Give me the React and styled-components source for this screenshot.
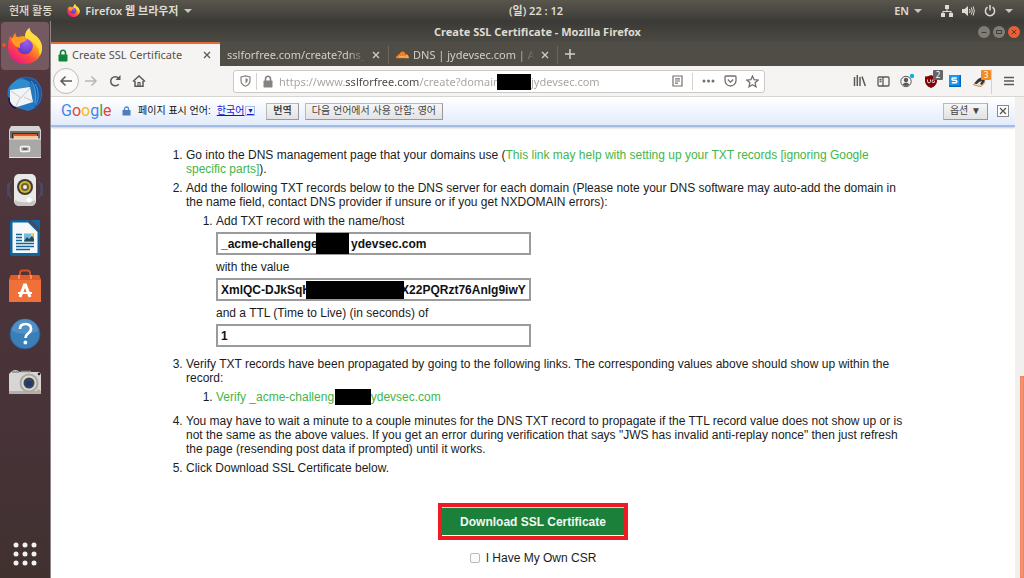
import React from "react";
import styled, { createGlobalStyle, css } from "styled-components";

const UI = `"Noto Sans", "Noto Sans CJK KR", sans-serif`;
const WEB = `"Liberation Sans", "Noto Sans CJK KR", sans-serif`;

const GlobalStyle = createGlobalStyle`
  *, *::before, *::after { box-sizing: border-box; }
  body { margin: 0; background: #ffffff; }
  button, input { font: inherit; }
  svg { display: block; flex: none; }
`;

/* ---------- desktop shell ---------- */

const Desktop = styled.div`
  display: flex;
  flex-direction: column;
  height: 100vh;
  overflow: hidden;
  font-family: ${UI};
  font-size: 11px;
  line-height: 16px;
`;

const TopBar = styled.header`
  display: flex;
  align-items: center;
  height: 21px;
  flex: none;
  background: linear-gradient(#59564d, #3c3b37);
  color: #dfdbd2;
  font-weight: 500;
`;

const TopGroup = styled.div`
  display: flex;
  flex: 1 1 0;
  align-items: center;
  gap: ${(p) => p.$gap}px;
  justify-content: ${(p) => (p.$end ? "flex-end" : "flex-start")};
  padding: ${(p) => (p.$end ? "0 11px 0 0" : "0 0 0 9px")};
  margin-right: ${(p) => (p.$end ? 0 : 50)}px;
`;

const PanelButton = styled.button`
  display: flex;
  align-items: center;
  gap: 5px;
  padding: 0;
  border: 0;
  background: none;
  color: inherit;
  font-weight: ${(p) => (p.$strong ? 600 : 500)};
  white-space: nowrap;
`;

const StatusIcons = styled(PanelButton)`
  gap: 9px;
  margin-left: 10px;
`;

const Caret = styled.span`
  border: 4px solid transparent;
  border-top-color: #c9c5bc;
  border-bottom: 0;
`;

const Workspace = styled.div`
  display: flex;
  flex: 1;
  min-height: 0;
`;

const Dock = styled.nav`
  display: flex;
  flex-direction: column;
  justify-content: space-between;
  width: 50px;
  flex: none;
  background: linear-gradient(#57363d, #4c353b 30%, #483339 70%, #40312f);
`;

const DockList = styled.div`
  display: flex;
  flex-direction: column;
  padding-top: 1px;
`;

const DockItem = styled.button`
  display: flex;
  align-items: center;
  justify-content: center;
  height: 48px;
  padding: 0;
  border: 0;
  margin: 0 1px;
  border-radius: 4px;
  background: ${(p) => (p.$active ? "#745a60" : "none")};
  ${(p) =>
    p.$active &&
    css`
      position: relative;
      &::before {
        content: "";
        position: absolute;
        left: 1px;
        top: 21px;
        width: 4px;
        height: 4px;
        border-radius: 50%;
        background: #e95420;
      }
    `}
`;

/* ---------- browser window ---------- */

const Window = styled.main`
  display: flex;
  flex-direction: column;
  flex: 1;
  min-width: 0;
  border-left: 1px solid #8d8688;
`;

const TitleBar = styled.div`
  display: grid;
  grid-template-columns: 1fr auto 1fr;
  align-items: center;
  height: 21px;
  flex: none;
  padding: 0 4px;
  background: linear-gradient(#3b3a36, #4b4943);
  color: #dfdbd2;
`;

const WindowTitle = styled.h1`
  grid-column: 2;
  margin: 0;
  font-size: 11px;
  font-weight: 700;
`;

const WindowControls = styled.div`
  display: flex;
  justify-content: flex-end;
  gap: 3px;
`;

const WindowButton = styled.button`
  display: flex;
  align-items: center;
  justify-content: center;
  width: 12px;
  height: 12px;
  padding: 0;
  border: 0;
  border-radius: 50%;
  background: ${(p) => (p.$close ? "#ec5f32" : "#807d76")};
  color: #3f3d38;
`;

const TabStrip = styled.div`
  display: flex;
  height: 24px;
  flex: none;
  background: #504d46;
`;

const Tab = styled.div`
  display: flex;
  align-items: center;
  gap: 4px;
  flex: 0 1 169px;
  min-width: 0;
  padding: 0 7px;
  color: ${(p) => (p.$active ? "#55524c" : "#d3cfc7")};
  ${(p) =>
    p.$active
      ? css`
          background: #f5f4f2;
          border-top: 2px solid #e8683c;
        `
      : css`
          border-top: 2px solid transparent;
          background: linear-gradient(#69665e, #69665e) right 2px / 1px 18px no-repeat;
        `}
`;

const TabLabel = styled.span`
  flex: 1;
  min-width: 0;
  overflow: hidden;
  white-space: nowrap;
  ${(p) => !p.$whole && "mask-image: linear-gradient(to right, #000 calc(100% - 18px), transparent);"}
`;

const IconButton = styled.button`
  position: relative;
  display: flex;
  align-items: center;
  justify-content: center;
  flex: none;
  width: ${(p) => p.$w || 24}px;
  height: 24px;
  padding: 0;
  border: 0;
  background: none;
  color: ${(p) => p.$color || "#5b5954"};
`;

const Toolbar = styled.div`
  display: flex;
  align-items: center;
  height: 31px;
  flex: none;
  padding: 0 3px 0 2px;
  background: #f5f4f2;
  border-bottom: 1px solid #d8d6d3;
`;

const BackButton = styled(IconButton)`
  width: 26px;
  height: 26px;
  border: 1px solid #bebbb7;
  border-radius: 50%;
  background: #fbfafa;
`;

const MenuButton = styled(IconButton)`
  margin-left: 5px;
`;

const UrlBar = styled.form`
  position: relative;
  display: flex;
  align-items: center;
  flex: 1;
  min-width: 0;
  height: 23px;
  margin: 0 82px;
  border: 1px solid #cbc8c5;
  border-radius: 3px;
  background: #ffffff;
`;

/* the host name is darker than the rest of the address */
const UrlInput = styled.input`
  flex: 1;
  min-width: 0;
  height: 20px;
  padding: 0;
  border: 0;
  outline: 0;
  color: transparent;
  background: linear-gradient(to right, #a3a19e 66px, #45433f 66px, #45433f 140px, #a3a19e 140px);
  background-clip: text;
`;

const Divider = styled.span`
  width: 1px;
  height: ${(p) => p.$h || 17}px;
  margin: 0 ${(p) => p.$gap || 0}px;
  background: #d4d1ce;
`;

const Badge = styled.span`
  position: absolute;
  top: 1px;
  right: 0;
  width: 10px;
  height: 10px;
  border-radius: 1px;
  background: ${(p) => p.$color};
  color: #ffffff;
  font-size: 8px;
  line-height: 10px;
`;

/* black bar laid over private text */
const Redaction = styled.span`
  position: absolute;
  top: ${(p) => p.$top}px;
  left: ${(p) => p.$left}px;
  width: ${(p) => p.$width}px;
  height: ${(p) => p.$height}px;
  background: #000000;
`;

/* ---------- page ---------- */

const Viewport = styled.div`
  display: flex;
  flex: 1;
  min-height: 0;
`;

const Page = styled.div`
  flex: 1;
  min-width: 0;
  background: #ffffff;
  font-family: ${WEB};
  overflow: hidden;
`;

const ScrollTrack = styled.div`
  display: flex;
  flex-direction: column;
  align-items: flex-end;
  justify-content: flex-end;
  width: 9px;
  flex: none;
  background: #f1f0ee;
`;

const ScrollThumb = styled.div`
  width: 4px;
  height: 42%;
  border: 1px solid #ee8560;
  background: #f4946f;
`;

const TranslateBar = styled.div`
  display: flex;
  align-items: center;
  height: 30px;
  padding: 0 6px 0 10px;
  background: linear-gradient(#ffffff, #e3ecfb);
  border-bottom: 2px solid #a2bce3;
  box-shadow: 0 1px 2px #c9c9c9;
  font-size: 10px;
  color: #111111;
`;

const GoogleLogo = styled.span`
  display: flex;
  width: 61px;
  font-family: Roboto, sans-serif;
  font-size: 16px;
  line-height: 20px;
`;

const Letter = styled.span`
  color: ${(p) => p.$color};
`;

const LanguageLink = styled.a`
  display: flex;
  align-items: center;
  gap: 1px;
  margin: 0 11px 0 6px;
  color: #1717cc;
`;

const LanguageArrow = styled.span`
  display: flex;
  align-items: center;
  justify-content: center;
  width: 10px;
  height: 10px;
  border: 1px solid #a2bce3;
  font-size: 7px;
`;

const BarButton = styled.button`
  height: 17px;
  margin-right: 6px;
  padding: 0 6px;
  border: 1px solid #b9b9b9;
  border-right-color: #999999;
  border-bottom-color: #999999;
  background: linear-gradient(#f6f6f6, #e2e2e2);
  color: #444444;
  font-weight: ${(p) => (p.$strong ? 700 : 400)};
  line-height: 14px;
  white-space: nowrap;
`;

const BarLock = styled.svg`
  margin-right: 7px;
`;

const Spacer = styled.span`
  flex: 1;
`;

const CloseBox = styled.button`
  display: flex;
  align-items: center;
  justify-content: center;
  width: 12px;
  height: 12px;
  margin: 0 0 0 3px;
  padding: 0;
  border: 1px solid #8a8a8a;
  background: #ffffff;
  color: #555555;
`;

const Article = styled.article`
  width: 100%;
  max-width: 754px;
  margin: 0 auto;
  padding: 21px 0 0;
  font-size: 12px;
  line-height: 14px;
  color: #1c1c1c;
`;

const Steps = styled.ol`
  margin: 0;
  padding: 0 0 0 30px;
`;

const SubSteps = styled(Steps)`
  margin: 5px 0 10px;
`;

const Step = styled.li`
  margin: 0 0 5px;
`;

const GreenLink = styled.a`
  position: relative;
  color: #43b649;
  text-decoration: none;
`;

const Field = styled.label`
  display: block;
  width: 315px;
  max-width: 100%;
  margin-bottom: 5px;
`;

const FieldBox = styled.span`
  position: relative;
  display: block;
  margin: 4px 0 0;
`;

const FieldInput = styled.input`
  display: block;
  width: 100%;
  height: 23px;
  padding: 0 3px;
  border: 2px solid #9b9b9b;
  border-radius: 0;
  outline: 0;
  background: #ffffff;
  color: #111111;
  font-weight: 700;
`;

const Actions = styled.div`
  display: flex;
  flex-direction: column;
  align-items: center;
  gap: 11px;
  margin-top: 28px;
`;

const DownloadButton = styled.button`
  height: 37px;
  padding: 0 18px;
  border: 4px solid #ed1c24;
  background: #1b8039;
  box-shadow: inset 0 1px 0 #d8e6dc, inset 0 -1px 0 #ffffff;
  color: #f3f8f4;
  font-weight: 700;
  white-space: nowrap;
`;

const CsrLabel = styled.label`
  display: flex;
  align-items: center;
  gap: 6px;
`;

const CsrCheck = styled.input`
  appearance: none;
  width: 10px;
  height: 10px;
  margin: 0;
  border: 1px solid #bdbab7;
  border-radius: 2px;
  background: #fafafa;
`;

/* ---------- drawings ---------- */

const Firefox = ({ size }) => (
  <svg width={size} height={size} viewBox="0 0 36 36" aria-hidden="true">
    <defs>
      <linearGradient id="fxBody" x1="0.85" y1="0.1" x2="0.2" y2="0.95">
        <stop offset="0" stopColor="#fff44f" />
        <stop offset="0.35" stopColor="#ffa21f" />
        <stop offset="0.65" stopColor="#ff4a3d" />
        <stop offset="1" stopColor="#e9178a" />
      </linearGradient>
      <radialGradient id="fxGlobe" cx="0.6" cy="0.2" r="0.9">
        <stop offset="0" stopColor="#a05cf5" />
        <stop offset="1" stopColor="#5a35b8" />
      </radialGradient>
    </defs>
    <path d="M3 8c.6 1 1.400 1.700 2.500 2 .7-2.200 1.500-3.800 3-5 0 2 .6 3.300 2 4.300 2.200-1 5-1.300 7.500-.8 0-4 2-6.800 4.500-8.500.3 3.500 2.200 5 5 7 4 2.800 7.500 7 7.500 13 0 9-7.500 16-17 16S1 28.800 1 20c0-4.800.7-8.600 2-12z" fill="url(#fxBody)" />
    <path d="M22.500 0c.3 3.500 2.200 5 5 7 4 2.800 7.500 7 7.500 13 0 3-.8 5.800-2.300 8 .3-8-4.700-13-10.200-15.500C18.500 10.500 18 8.500 18 8.500c0-4 2-6.800 4.500-8.500z" fill="#ffdf3d" opacity=".85" />
    <circle cx="18" cy="18.500" r="7.800" fill="url(#fxGlobe)" />
    <path d="M4 11c3-2.500 7-2.500 10-.5 2 .3 4.200.3 6 .2-.8 2.300-3.500 3.300-6.300 4.300-.8 1.400-1.200 3-.7 5C8 19 5 15 4 11z" fill="#ff9b22" />
  </svg>
);

const Thunderbird = () => (
  <svg width="36" height="36" viewBox="0 0 36 36" aria-hidden="true">
    <path d="M7 6C12 0 22-1 29 4c7 6 8 17 3 24-3 4-7 6-11 7L7 31C0 25 0 18 1 13c1-3 3-5 6-7z" fill="#2577bf" />
    <path d="M14 2c9-3 19 3 20 13 1 7-2 14-7 18 3-8 4-18-1-24-3-4-8-6-12-7z" fill="#1a58a3" />
    <path d="M5 8c5-6 13-6 18-1l-2 5-15 4C2 14 2 11 5 8z" fill="#2f8ccd" />
    <path d="M28 8c4 6 4 14 1 21M24 5c3 3 6 11 4 22" stroke="#4b9fda" fill="none" />
    <path d="M1 21c0 6 3 10 7 12l4-4z" fill="#1e184d" />
    <path d="M3 14l20-3 3 15-16 5c-3 0-6-3-7-6z" fill="#f3f3f6" />
    <path d="M4 15l10 7 9-10M9 30l4-8M25 25l-8-4" fill="none" stroke="#b8bcc5" strokeWidth=".8" />
  </svg>
);

const Files = () => (
  <svg width="34" height="34" viewBox="0 0 34 34" aria-hidden="true">
    <path d="M3 1h28l2 4v28H1V5z" fill="#d5d4d2" />
    <path d="M2 6h30v10H2z" fill="#6e6b68" />
    <path d="M4 8h26v7H4z" fill="#332f2c" />
    <path d="M5 9h24v6H5z" fill="#de5c2b" />
    <path d="M6 11h24v4H6z" fill="#f5c9a0" />
    <path d="M1 14h32v19H1z" fill="#a9a8a6" />
    <path d="M1 14h32M1 32.500h32" stroke="#e3e3e1" />
    <rect x="12.500" y="21.500" width="9" height="5" rx="1" fill="#a9a8a6" stroke="#f5f5f5" strokeWidth="1.500" />
    <path d="M15 24h4" stroke="#555" strokeWidth="1.500" />
  </svg>
);

const Rhythmbox = () => (
  <svg width="36" height="34" viewBox="0 0 36 34" aria-hidden="true">
    <path d="M4 8c-3 5-3 12 0 17M1.500 10c-1.500 4-1.500 9 0 13M32 8c3 5 3 12 0 17M34.500 10c1.500 4 1.500 9 0 13" fill="none" stroke="#4a4a66" strokeWidth="1.500" />
    <rect x="7" y="1" width="22" height="32" rx="5" fill="#e8e8e6" />
    <path d="M8 27c5 3 15 3 20 0v2c0 3-2 4-4 4H12c-2 0-4-1-4-4z" fill="#c5c5c3" />
    <circle cx="18" cy="14" r="8" fill="#3d3c38" />
    <circle cx="18" cy="14" r="6" fill="#d8b52b" />
    <circle cx="18" cy="14" r="4" fill="#6c6234" />
    <circle cx="18" cy="14" r="2" fill="#eee" />
    <circle cx="22" cy="27" r="2.500" fill="#fff" />
  </svg>
);

const Writer = () => (
  <svg width="30" height="36" viewBox="0 0 30 36" aria-hidden="true">
    <path d="M2 0h19l9 9v27H2q-2 0-2-2V2q0-2 2-2z" fill="#0e649e" />
    <path d="M2.500 2.500H18L27.500 12V33h-25z" fill="#f6f8fa" />
    <path d="M18 0l12 12V1q0-1-1-1z" fill="#5b4048" />
    <path d="M21 0h8q1 0 1 1v9z" fill="#1268a5" />
    <path d="M6 14.500h6M6 17.500h6M6 20.500h6M6 23.500h18M6 26.500h18M6 29.500h14" stroke="#12659c" strokeWidth="1.700" />
    <rect x="14" y="13.500" width="10" height="8" fill="#72b9df" />
    <path d="M14 21l3-4 2 2 3-3 2 3v2.500H14z" fill="#244b57" />
    <circle cx="22" cy="15" r="1.300" fill="#ffd33b" />
  </svg>
);

const SoftwareBag = () => (
  <svg width="34" height="34" viewBox="0 0 34 34" aria-hidden="true">
    <path d="M12 8V4q0-2.500 2.500-2.500h5Q22 1.500 22 4v4" fill="none" stroke="#d4501e" strokeWidth="2" />
    <path d="M3 6h28l2 5v22H1V11z" fill="#f0703a" />
    <path d="M1 11l2-5h28l2 5z" fill="#e25c28" />
    <path d="M11 6v4M23 6v4" stroke="#ffa27b" strokeWidth="1.500" />
    <path d="M12 28l4.500-12h1L22 28" fill="none" stroke="#fff" strokeWidth="3" />
    <path d="M10 24h14" stroke="#fff" strokeWidth="2" />
  </svg>
);

const Help = () => (
  <svg width="32" height="32" viewBox="0 0 32 32" aria-hidden="true">
    <circle cx="16" cy="16" r="15" fill="#3b7fb9" stroke="#295f94" />
    <path d="M3 13a13 12 0 0 1 26 0q-13 6-26 0z" fill="#619bcb" opacity=".6" />
    <path d="M11 11q0-5 5.500-5t5.500 5q0 2.500-3 4.500-2.500 2-2.500 4.500" fill="none" stroke="#fff" strokeWidth="2.700" />
    <circle cx="16.400" cy="24.500" r="1.900" fill="#fff" />
  </svg>
);

const Camera = () => (
  <svg width="34" height="26" viewBox="0 0 34 26" aria-hidden="true">
    <path d="M3 3q4-4 9 0h19l2 2v20H1V5z" fill="#d7d6d4" />
    <path d="M4 3h7M13 2.500h10" stroke="#8a8a88" strokeWidth="1.500" />
    <path d="M1 22h32v3H1z" fill="#b2b1ae" />
    <circle cx="21" cy="14" r="9.500" fill="#aaa9a6" />
    <circle cx="21" cy="14" r="7.500" fill="#d9d9d8" />
    <circle cx="21" cy="14" r="5.500" fill="#3d434c" />
    <rect x="18" y="12" width="6" height="5" fill="#1c3b74" />
    <circle cx="31" cy="5" r="1.300" fill="#222" />
    <circle cx="30.500" cy="21.500" r="1.300" fill="#f0a030" />
  </svg>
);

const AppGrid = () => (
  <svg width="24" height="24" viewBox="0 0 24 24" fill="#f2f0f0" aria-hidden="true">
    {[3, 12, 21].map((y) => [3, 12, 21].map((x) => <circle key={`${x}-${y}`} cx={x} cy={y} r="2.500" />))}
  </svg>
);

const Line = ({ w = 16, h = 16, sw = 1.5, children }) => (
  <svg width={w} height={h} viewBox={`0 0 ${w} ${h}`} fill="none" stroke="currentColor" strokeWidth={sw} aria-hidden="true">
    {children}
  </svg>
);

const Padlock = ({ color }) => (
  <svg width="10" height="13" viewBox="0 0 10 13" aria-hidden="true">
    <path d="M2.500 6V4a2.500 2.700 0 0 1 5 0v2" fill="none" stroke={color} strokeWidth="1.600" />
    <rect x="0.500" y="5.500" width="9" height="7" rx="0.800" fill={color} />
  </svg>
);

const Cross = ({ size = 8 }) => (
  <svg width={size} height={size} viewBox="0 0 8 8" fill="none" stroke="currentColor" strokeWidth="1.300" aria-hidden="true">
    <path d="M1 1l6 6M7 1L1 7" />
  </svg>
);

const Cloud = () => (
  <svg width="13" height="8" viewBox="0 0 14 8" aria-hidden="true">
    <path d="M0 7.500C0 5.500 1 4.800 2 4.600 2 3 3.200 2.600 4 3 4.500 1 6 0 7.500.3 9.200.6 10 2 10.200 3l-.7 4.500z" fill="#f48120" />
    <path d="M9.500 7.500l.9-4.200c2-.2 3.500 1.700 3.500 4.200z" fill="#faad3f" />
    <path d="M3 6h6.500" stroke="#fff" strokeWidth=".6" />
  </svg>
);

/* ---------- content ---------- */

const nb = (n) => "\u00a0".repeat(n);

const dockApps = [
  ["Firefox", <Firefox size={36} />],
  ["Thunderbird", <Thunderbird />],
  ["Files", <Files />],
  ["Rhythmbox", <Rhythmbox />],
  ["Writer", <Writer />],
  ["Software", <SoftwareBag />],
  ["Help", <Help />],
  ["Camera", <Camera />],
];

const logoLetters = [
  ["G", "#4285f4"],
  ["o", "#ea4335"],
  ["o", "#fbbc05"],
  ["g", "#4285f4"],
  ["l", "#34a853"],
  ["e", "#ea4335"],
];

const fields = [
  { label: "Add TXT record with the name/host", value: `_acme-challenge${nb(10)}ydevsec.com`, bar: [100, 1, 33, 21] },
  { label: "with the value", value: `XmlQC-DJkSqH${nb(27)}X22PQRzt76Anlg9iwY`, bar: [90, 3, 98, 18] },
  { label: "and a TTL (Time to Live) (in seconds) of", value: "1" },
];

function SystemBar() {
  return (
    <TopBar>
      <TopGroup $gap={15}>
        <PanelButton>현재 활동</PanelButton>
        <PanelButton $strong>
          <Firefox size={13} />
          Firefox 웹 브라우저
          <Caret />
        </PanelButton>
      </TopGroup>
      <PanelButton $strong>(일) 22 : 12</PanelButton>
      <TopGroup $end $gap={9}>
        <PanelButton $strong>
          EN
          <Caret />
        </PanelButton>
        <StatusIcons aria-label="System menu">
          <svg width="12" height="12" viewBox="0 0 12 12" fill="currentColor">
            <path d="M4 0h4v4H4zM0 8h4v4H0zM8 8h4v4H8zM5.500 4h1v2h4v2h-1V7h-7v1h-1V6h4z" />
          </svg>
          <svg width="13" height="12" viewBox="0 0 13 12">
            <path d="M0 4h2.500L6 1v10L2.500 8H0z" fill="currentColor" />
            <path d="M7.500 4q1.200 2 0 4M9.300 2.500q2 3.500 0 7M11.200 1.500q2.200 4.500 0 9" fill="none" stroke="currentColor" />
          </svg>
          <svg width="12" height="12" viewBox="0 0 12 12" fill="none" stroke="currentColor" strokeWidth="1.500">
            <path d="M3.500 2.200a4.600 4.600 0 1 0 5 0M6 0v5.500" />
          </svg>
          <Caret />
        </StatusIcons>
      </TopGroup>
    </TopBar>
  );
}

function Tabs() {
  return (
    <TabStrip>
      <Tab $active>
        <Padlock color="#12843a" />
        <TabLabel $whole>Create SSL Certificate</TabLabel>
        <IconButton $w={12} aria-label="Close tab"><Cross /></IconButton>
      </Tab>
      <Tab>
        <TabLabel>sslforfree.com/create?dns_t</TabLabel>
        <IconButton $w={12} $color="#d3cfc7" aria-label="Close tab"><Cross /></IconButton>
      </Tab>
      <Tab>
        <Cloud />
        <TabLabel>DNS | jydevsec.com | Acc</TabLabel>
        <IconButton $w={12} $color="#d3cfc7" aria-label="Close tab"><Cross /></IconButton>
      </Tab>
      <IconButton $color="#d3cfc7" aria-label="New tab">
        <Line w={12} h={12}><path d="M6 1v10M1 6h10" /></Line>
      </IconButton>
    </TabStrip>
  );
}

function Navigation() {
  return (
    <Toolbar>
      <BackButton aria-label="Back">
        <Line w={14} h={12}><path d="M13 6H2M6.500 1.500L2 6l4.500 4.500" /></Line>
      </BackButton>
      <IconButton $color="#b8b6b3" aria-label="Forward">
        <Line w={14} h={12}><path d="M1 6h11M7.500 1.500L12 6l-4.500 4.500" /></Line>
      </IconButton>
      <IconButton aria-label="Reload">
        <Line w={12} h={12}><path d="M9.800 9.300A4.600 4.600 0 1 1 9.600 3" /><path d="M11.500 0v5h-5z" fill="currentColor" stroke="none" /></Line>
      </IconButton>
      <IconButton aria-label="Home">
        <Line w={14} h={12}><path d="M1 6.500L7 1l6 5.500M3 6v5.200h8V6" /><path d="M6 11V7.500h2V11" strokeWidth="1.200" /></Line>
      </IconButton>
      <UrlBar>
        <IconButton type="button" $w={22} $color="#858380" aria-label="Protection">
          <Line w={11} h={12} sw={1.2}><path d="M5.500.800L10 2v3.500q0 4-4.500 5.700Q1 9.500 1 5.500V2z" /><path d="M5.500 3.300v5.200q2-1 2.200-3V3.800z" fill="currentColor" stroke="none" /></Line>
        </IconButton>
        <Divider />
        <IconButton type="button" $w={22} aria-label="Site information"><Padlock color="#85837f" /></IconButton>
        <UrlInput aria-label="Address" defaultValue={`https://www.sslforfree.com/create?domains${nb(9)}jydevsec.com`} />
        <Redaction $left={263} $top={3} $width={34} $height={16} />
        <IconButton type="button" $color="#73716d" aria-label="Reader view">
          <Line w={11} h={12} sw={1.2}><path d="M1 1h9v10H1zM3 3.800h5M3 6h5M3 8.200h3" /></Line>
        </IconButton>
        <Divider $gap={3} />
        <IconButton type="button" $color="#73716d" aria-label="Page actions">
          <svg width="13" height="4" viewBox="0 0 13 4" fill="currentColor"><circle cx="2" cy="2" r="1.500" /><circle cx="6.500" cy="2" r="1.500" /><circle cx="11" cy="2" r="1.500" /></svg>
        </IconButton>
        <IconButton type="button" $w={20} $color="#73716d" aria-label="Pocket">
          <Line w={13} h={12} sw={1.3}><path d="M2 1h9q1 0 1 1v3.500a5.500 5.500 0 0 1-11 0V2q0-1 1-1zM3.800 4.500l2.700 2.700 2.700-2.700" /></Line>
        </IconButton>
        <IconButton type="button" $color="#73716d" aria-label="Bookmark">
          <Line w={13} h={13} sw={1.3}><path d="M6.500 1l1.600 3.700 4 .4-3 2.700.9 4-3.500-2.100L3 11.800l.9-4-3-2.700 4-.4z" /></Line>
        </IconButton>
      </UrlBar>
      <IconButton aria-label="Library">
        <Line w={13} h={12}><path d="M1.500 2v9M4.300 0v11M7 2v9M9 1.500l3.300 9.500" /></Line>
      </IconButton>
      <IconButton aria-label="Sidebar">
        <Line w={13} h={11} sw={1.3}><path d="M2 1h9q1 0 1 1v7q0 1-1 1H2q-1 0-1-1V2q0-1 1-1zM6 1v9M2.500 3.500h2M2.500 5.500h2" /></Line>
      </IconButton>
      <IconButton aria-label="Account">
        <svg width="16" height="16" viewBox="0 0 16 16">
          <circle cx="7" cy="8.500" r="5.200" fill="none" stroke="#5b5954" />
          <circle cx="7" cy="7" r="2.200" fill="#5b5954" />
          <path d="M3.500 11.500q3.500-4 7 0-3.500 3-7 0z" fill="#5b5954" />
          <circle cx="13" cy="3" r="2.200" fill="#0ab0f5" />
        </svg>
      </IconButton>
      <IconButton aria-label="uBlock">
        <svg width="12" height="13" viewBox="0 0 12 13">
          <path d="M6 0q3 1.500 6 1.500V6q0 4.500-6 7-6-2.500-6-7V1.500Q3 1.500 6 0z" fill="#800309" />
          <path d="M2.500 4.500v2q0 1.300 1.500 1.300t1.500-1.300v-2M9.500 5q-2.500-1-2.500 1.200t2.500 1.100V6.200" fill="none" stroke="#fff" strokeWidth=".8" />
        </svg>
        <Badge $color="#666563">2</Badge>
      </IconButton>
      <IconButton aria-label="Stylus">
        <svg width="12" height="12" viewBox="0 0 12 12">
          <path d="M0 0h12v12H0z" fill="#0464bd" />
          <path d="M0 0h10.500v10.500H0z" fill="#1496f5" />
          <path d="M7.800 3H4Q3 3 3 4t1 1.200h2.500Q7.800 5.200 7.800 6.500t-1.300 1.300H2.800" fill="none" stroke="#fff" strokeWidth="1.600" />
        </svg>
      </IconButton>
      <IconButton aria-label="Privacy Badger">
        <svg width="13" height="12" viewBox="0 0 13 12">
          <path d="M0 9l5-5 6-2 2 5-5 4z" fill="#e9e3dc" />
          <path d="M1 8.500L5 4l4-2 3 4-3 4-2-1 2-3-3 1-2 2z" fill="#3e3530" />
          <path d="M0 9.500q4 1.500 8 2l4-4" stroke="#d6823a" fill="none" />
        </svg>
        <Badge $color="#f08c23">3</Badge>
      </IconButton>
      <Divider $h={25} />
      <MenuButton aria-label="Menu">
        <Line w={10} h={10} sw={1.3}><path d="M0 1.500h10M0 5h10M0 8.500h10" /></Line>
      </MenuButton>
    </Toolbar>
  );
}

function Translate() {
  return (
    <TranslateBar>
      <GoogleLogo aria-label="Google">
        {logoLetters.map(([c, color], i) => <Letter key={i} $color={color}>{c}</Letter>)}
      </GoogleLogo>
      <BarLock width="9" height="10" viewBox="0 0 9 10">
        <path d="M2.500 5V3a2 2 0 0 1 4 0v2" fill="none" stroke="#5b86c4" strokeWidth="1.300" />
        <rect x="0.500" y="4" width="8" height="5.500" fill="#4f7cc0" />
      </BarLock>
      <span>페이지 표시 언어:</span>
      <LanguageLink href="#language">
        한국어<LanguageArrow>▼</LanguageArrow>
      </LanguageLink>
      <BarButton $strong>번역</BarButton>
      <BarButton>다음 언어에서 사용 안함: 영어</BarButton>
      <Spacer />
      <BarButton>옵션 ▼</BarButton>
      <CloseBox aria-label="Close"><Cross /></CloseBox>
    </TranslateBar>
  );
}

function Instructions() {
  return (
    <Article>
      <Steps>
        <Step>
          Go into the DNS management page that your domains use (
          <GreenLink href="#help">This link may help with setting up your TXT records [ignoring Google specific parts]</GreenLink>).
        </Step>
        <Step>
          Add the following TXT records below to the DNS server for each domain (Please note your DNS software may auto-add the
          domain in the name field, contact DNS provider if unsure or if you get NXDOMAIN errors):
          <SubSteps>
            <Step>
              {fields.map((f) => (
                <Field key={f.label}>
                  {f.label}
                  <FieldBox>
                    <FieldInput defaultValue={f.value} />
                    {f.bar && <Redaction $left={f.bar[0]} $top={f.bar[1]} $width={f.bar[2]} $height={f.bar[3]} />}
                  </FieldBox>
                </Field>
              ))}
            </Step>
          </SubSteps>
        </Step>
        <Step>
          Verify TXT records have been propagated by going to the following links. The corresponding values above should show up
          within the record:
          <SubSteps>
            <Step>
              <GreenLink href="#verify">
                Verify _acme-challeng{nb(11)}ydevsec.com
                <Redaction $left={119} $top={-1} $width={36} $height={16} />
              </GreenLink>
            </Step>
          </SubSteps>
        </Step>
        <Step>
          You may have to wait a minute to a couple minutes for the DNS TXT record to propagate if the TTL record value does not
          show up or is not the same as the above values. If you get an error during verification that says "JWS has invalid
          anti-replay nonce" then just refresh the page (resending post data if prompted) until it works.
        </Step>
        <Step>Click Download SSL Certificate below.</Step>
      </Steps>
      <Actions>
        <DownloadButton>Download SSL Certificate</DownloadButton>
        <CsrLabel>
          <CsrCheck type="checkbox" />
          I Have My Own CSR
        </CsrLabel>
      </Actions>
    </Article>
  );
}

export default function App() {
  return (
    <Desktop>
      <GlobalStyle />
      <SystemBar />
      <Workspace>
        <Dock>
          <DockList>
            {dockApps.map(([name, icon], i) => (
              <DockItem key={name} $active={i === 0} aria-label={name}>{icon}</DockItem>
            ))}
          </DockList>
          <DockItem aria-label="Show applications"><AppGrid /></DockItem>
        </Dock>
        <Window>
          <TitleBar>
            <WindowTitle>Create SSL Certificate - Mozilla Firefox</WindowTitle>
            <WindowControls>
              <WindowButton aria-label="Minimize"><Line w={8} h={8} sw={1}><path d="M1.500 4.500h5" /></Line></WindowButton>
              <WindowButton aria-label="Maximize"><Line w={8} h={8} sw={1}><path d="M1.500 2.500h5v3h-5z" /></Line></WindowButton>
              <WindowButton $close aria-label="Close window"><Cross size={6} /></WindowButton>
            </WindowControls>
          </TitleBar>
          <Tabs />
          <Navigation />
          <Viewport>
            <Page>
              <Translate />
              <Instructions />
            </Page>
            <ScrollTrack><ScrollThumb /></ScrollTrack>
          </Viewport>
        </Window>
      </Workspace>
    </Desktop>
  );
}
